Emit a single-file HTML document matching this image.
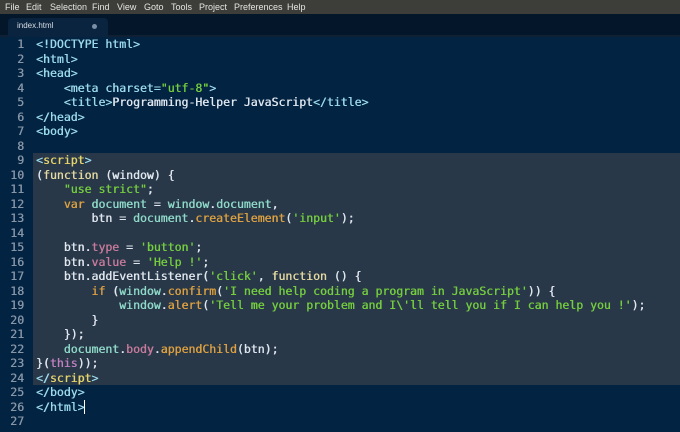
<!DOCTYPE html>
<html><head><meta charset="utf-8"><style>
body{margin:0;width:680px;height:432px;overflow:hidden;background:#022342;font-family:"Liberation Sans",sans-serif;position:relative}
#menu{position:absolute;left:0;top:0;width:680px;height:14px;background:#3d3d3a;color:#e4e4e0;font-size:9px;line-height:14px}
#menu span{position:absolute;top:0}
#tabs{position:absolute;top:14px;left:0;width:680px;height:21px;background:#04162a;border-bottom:2px solid #0f2035}
#tab{position:absolute;left:8px;top:4px;width:100px;height:19px;background:#0a2440;border-radius:4px 4px 0 0;color:#d8dde2;font-size:8px;line-height:16px}
#sel{position:absolute;left:33px;top:153px;width:647px;height:232px;background:#283849}
pre{margin:0;font-family:"DejaVu Sans Mono",monospace;font-size:11.5px;line-height:14.5px;position:absolute;top:37px;text-shadow:0.4px 0 0 currentColor}
#nums{left:0;width:24px;text-align:right;color:#8796a6}
#code{left:36px;color:#dfe6ee}
.t{color:#9ad8ea}.y{color:#e6d36a}.g{color:#74cc3e}.o{color:#dca040}.c{color:#8fd8c8}.p{color:#c77a9a}.v{color:#c080c0}.k{color:#e4d9a0}
</style></head><body>
<div id="menu"><span style="left:5px">File</span><span style="left:26px">Edit</span><span style="left:50px">Selection</span><span style="left:92px">Find</span><span style="left:117px">View</span><span style="left:144px">Goto</span><span style="left:171px">Tools</span><span style="left:199px">Project</span><span style="left:234px">Preferences</span><span style="left:287px">Help</span></div>
<div id="tabs"><div id="tab"><span style="position:absolute;left:9px">index.html</span><span style="position:absolute;left:84px;top:6px;width:5px;height:5px;border-radius:3px;background:#7a8ea6"></span></div></div>
<div id="sel"></div>
<pre id="nums">1
2
3
4
5
6
7
8
9
10
11
12
13
14
15
16
17
18
19
20
21
22
23
24
25
26
27</pre>
<pre id="code"><span class="t">&lt;!DOCTYPE html&gt;</span>
<span class="t">&lt;html&gt;</span>
<span class="t">&lt;head&gt;</span>
    <span class="t">&lt;meta charset=</span><span class="g">"utf-8"</span><span class="t">&gt;</span>
    <span class="t">&lt;title&gt;</span>Programming-Helper JavaScript<span class="t">&lt;/title&gt;</span>
<span class="t">&lt;/head&gt;</span>
<span class="t">&lt;body&gt;</span>

<span class="t">&lt;</span><span class="y">script</span><span class="t">&gt;</span>
(<span class="k">function</span> (window) {
    <span class="g">"use strict"</span>;
    <span class="o">var</span> <span class="c">document</span> = <span class="c">window</span>.<span class="c">document</span>,
        btn = <span class="c">document</span>.<span class="o">createElement</span>(<span class="g">'input'</span>);

    btn.<span class="p">type</span> = <span class="g">'button'</span>;
    btn.<span class="p">value</span> = <span class="g">'Help !'</span>;
    btn.addEventListener(<span class="g">'click'</span>, <span class="k">function</span> () {
        <span class="o">if</span> (<span class="c">window</span>.<span class="o">confirm</span>(<span class="g">'I need help coding a program in JavaScript'</span>)) {
            <span class="c">window</span>.<span class="o">alert</span>(<span class="g">'Tell me your problem and I\'ll tell you if I can help you !'</span>);
        }
    });
    <span class="c">document</span>.<span class="p">body</span>.<span class="o">appendChild</span>(btn);
}(<span class="v">this</span>));
<span class="t">&lt;/</span><span class="y">script</span><span class="t">&gt;</span>
<span class="t">&lt;/body&gt;</span>
<span class="t">&lt;/html&gt;</span><span style="border-left:1px solid #fff"></span>
</pre>
</body></html>
